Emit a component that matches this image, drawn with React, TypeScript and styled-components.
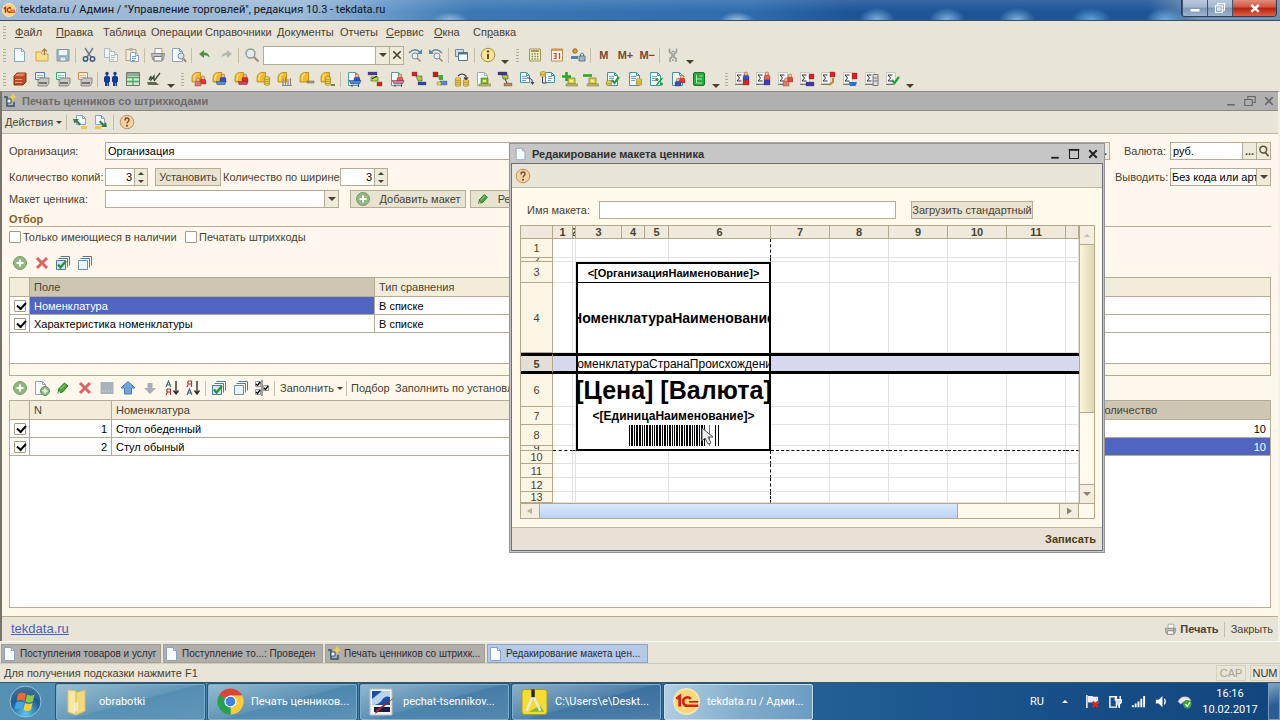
import React from "react";
import styled, { createGlobalStyle, css } from "styled-components";

const Global = createGlobalStyle`
  * { box-sizing: border-box; }
  body { margin: 0; background: #e8e4d8; font-family: "Liberation Sans", Arial, sans-serif; font-size: 11px; line-height: 14px; color: #4a4230; }
  button, input, select { font: inherit; color: inherit; margin: 0; padding: 0; border-radius: 0; }
  button { border: 0; background: none; }
  svg { display: block; flex: none; }
`;

/* ---------- shell ---------- */
const Shell = styled.div`
  min-height: 100vh;
  display: flex;
  flex-direction: column;
  overflow: hidden;
`;
const TitleBar = styled.header`
  height: 21px;
  display: flex;
  align-items: center;
  padding-left: 2px;
  gap: 4px;
  border-bottom: 1px solid #3d4c5c;
  color: #10151c;
  font-family: Roboto, sans-serif;
  background:
    radial-gradient(ellipse 18px 10px at 450px 22px, #9fc3e0, transparent),
    radial-gradient(ellipse 18px 10px at 737px 22px, #b4d0e6, transparent),
    radial-gradient(ellipse 18px 12px at 877px 20px, #7fb2dc, transparent),
    radial-gradient(ellipse 18px 12px at 947px 20px, #7fb2dc, transparent),
    radial-gradient(ellipse 18px 12px at 1017px 20px, #7fb2dc, transparent),
    radial-gradient(ellipse 20px 12px at 1091px 20px, #5fa4dc, transparent),
    radial-gradient(ellipse 20px 12px at 1165px 20px, #6aabde, transparent),
    linear-gradient(180deg, rgba(255, 255, 255, 0.12), transparent 60%),
    linear-gradient(90deg, #9fb9d4 0, #9dbad8 300px, #5d92c6 400px, #3c78b4 470px, #2f6cae 750px, #1d5597 850px, #1d5597 1150px, #7390b4 1200px);
`;
const TitleText = styled.h1`
  margin: 0;
  flex: 1;
  font: inherit;
  white-space: nowrap;
`;
const WinButtons = styled.div`
  align-self: flex-start;
  display: flex;
  height: 17px;
  margin-right: 3px;
  border: 1px solid #2c3c52;
  border-top: 0;
  border-radius: 0 0 4px 4px;
  overflow: hidden;
`;
const WinButton = styled.button<{ $close?: boolean }>`
  width: ${(p) => (p.$close ? 44 : 25)}px;
  display: grid;
  place-items: center;
  border-left: 1px solid #40546e;
  background: ${(p) =>
    p.$close
      ? "linear-gradient(#e08c7c, #d0543e 45%, #b8200c 50%, #d8604c)"
      : "linear-gradient(#b9c8dc, #a2b5cd 45%, #7d97b8 50%, #9db3cf)"};
`;
const MenuBar = styled.nav`
  height: 22px;
  display: flex;
  align-items: center;
  padding-left: 2px;
`;
const Grip = styled.span<{ $m?: number }>`
  width: 3px;
  height: 13px;
  margin: ${(p) => (p.$m ? `0 ${p.$m}px` : "0 3px 0 1px")};
  flex: none;
  background: repeating-linear-gradient(#b4ac98 0 1px, transparent 1px 3px);
`;
const MenuItem = styled.button<{ $w: number }>`
  width: ${(p) => p.$w}px;
  text-align: left;
  white-space: nowrap;
`;
const ToolBar = styled.div`
  height: 24px;
  flex: none;
  display: flex;
  align-items: center;
  padding-left: 2px;
`;
const FormTools = styled(ToolBar)`
  padding-left: 0;
`;
const Group = styled.div<{ $w: number }>`
  width: ${(p) => p.$w}px;
  flex: none;
  display: flex;
  & > button { flex: 1; }
`;
const Tool = styled.button`
  height: 20px;
  min-width: 0;
  display: grid;
  place-items: center;
`;
const MemKey = styled(Tool)`
  font-weight: bold;
  color: #7c4630;
`;
const Sep = styled.span`
  width: 1px;
  height: 15px;
  margin: 0 2px 0 1px;
  flex: none;
  background: #c5bda8;
`;
const More = styled.button`
  width: 12px;
  height: 18px;
  display: flex;
  align-items: flex-end;
  justify-content: center;
`;
const Tri = styled.span<{ $up?: boolean; $c?: string }>`
  width: 0;
  height: 0;
  border: 3px solid transparent;
  ${(p) =>
    p.$up
      ? css`border-top-width: 0; border-bottom-color: ${p.$c || "#4a4230"};`
      : css`border-bottom-width: 0; border-top-color: ${p.$c || "#4a4230"};`}
`;
const BigTri = styled(Tri)`
  border-width: 4px 4px 0;
`;

/* ---------- fields ---------- */
const FieldBox = styled.span<{ $w?: number; $h?: number }>`
  display: flex;
  ${(p) => (p.$w ? `width: ${p.$w}px;` : "flex: 1; min-width: 0;")}
  height: ${(p) => p.$h || 18}px;
  border: 1px solid #b3ab94;
  background: #fff;
  color: #000;
`;
const Input = styled.input<{ $right?: boolean }>`
  flex: 1;
  width: 0;
  min-width: 0;
  border: 0;
  outline: 0;
  padding: 0 2px;
  background: transparent;
  text-align: ${(p) => (p.$right ? "right" : "left")};
`;
const Select = styled.select`
  flex: 1;
  width: 0;
  min-width: 0;
  border: 0;
  outline: 0;
  padding: 0 0 0 1px;
  appearance: none;
  background: transparent;
`;
const FieldBtn = styled.button`
  width: 14px;
  display: grid;
  place-items: center;
  border-left: 1px solid #b3ab94;
  background: #efebda;
  font-weight: bold;
  color: #4a4230;
  line-height: 8px;
`;
const Spin = styled.span`
  width: 13px;
  display: flex;
  flex-direction: column;
  border-left: 1px solid #b3ab94;
  background: #efebda;
  & > button { flex: 1; display: grid; place-items: center; }
`;
const Btn = styled.button<{ $w: number }>`
  width: ${(p) => p.$w}px;
  height: 18px;
  flex: none;
  display: flex;
  align-items: center;
  justify-content: center;
  gap: 8px;
  border: 1px solid #b5ad96;
  background: #e8e2d0;
  white-space: nowrap;
  overflow: hidden;
`;

/* ---------- document window ---------- */
const Mdi = styled.main`
  flex: 1;
  position: relative;
  display: flex;
  flex-direction: column;
  border-left: 2px solid #77746e;
  border-right: 2px solid #f4f0e8;
  border-top: 1px solid #8a8a8a;
`;
const DocTitle = styled.div`
  height: 19px;
  display: flex;
  align-items: center;
  border-bottom: 1px solid #8c8a86;
  background: #b0b0b0;
  color: #6d6b68;
  font-weight: bold;
`;
const Heading = styled.h2`
  margin: 0 0 0 4px;
  flex: 1;
  font: inherit;
  white-space: nowrap;
`;
const TitleTool = styled.button`
  width: 19px;
  height: 16px;
  display: grid;
  place-items: center;
`;
const CommandBar = styled.div`
  height: 23px;
  display: flex;
  align-items: center;
  padding-left: 3px;
  border-bottom: 1px solid #c4b49c;
`;
const DropBtn = styled.button<{ $w?: number }>`
  ${(p) => (p.$w ? `width: ${p.$w}px;` : "")}
  display: flex;
  align-items: center;
  gap: 3px;
  white-space: nowrap;
`;
const Form = styled.section`
  flex: 1;
  display: flex;
  flex-direction: column;
  padding: 8px 7px 8px 7px;
  background: linear-gradient(#fff7ee, #fdf8ea);
`;
const Row = styled.div<{ $mb?: number }>`
  display: flex;
  align-items: center;
  height: 18px;
  margin-bottom: ${(p) => p.$mb || 0}px;
`;
const Label = styled.label<{ $w: number }>`
  width: ${(p) => p.$w}px;
  flex: none;
  white-space: nowrap;
`;
const Gap = styled.span<{ $w?: number }>`
  ${(p) => (p.$w ? `width: ${p.$w}px; flex: none;` : "flex: 1;")}
`;
const Section = styled.h3`
  margin: 4px 0 1px;
  height: 15px;
  border-bottom: 1px solid #b5ad96;
  color: #8a6216;
  font-size: 11px;
`;
const Check = styled.input`
  appearance: none;
  flex: none;
  width: 12px;
  height: 12px;
  margin: 0;
  border: 1px solid #a39b86;
  border-radius: 1px;
  background: #fff;
  position: relative;
  &:checked::after {
    content: "";
    position: absolute;
    left: 2px;
    top: 1px;
    width: 7px;
    height: 4px;
    border: solid #000;
    border-width: 0 0 2px 2px;
    transform: rotate(-48deg);
  }
`;
const CheckLabel = styled.label<{ $w: number }>`
  width: ${(p) => p.$w}px;
  display: flex;
  align-items: center;
  gap: 2px;
  white-space: nowrap;
`;
const ListBox = styled.div<{ $h?: number }>`
  ${(p) => (p.$h ? `height: ${p.$h}px;` : "flex: 1; min-height: 160px;")}
  display: flex;
  flex-direction: column;
  border: 1px solid #b3ab94;
  background: #fff;
`;
const ListFoot = styled.div`
  height: 12px;
  margin-top: auto;
  border-top: 1px solid #b3ab94;
  background: #fdf8ea;
`;
const List = styled.table`
  width: 100%;
  table-layout: fixed;
  border-collapse: separate;
  border-spacing: 0;
`;
const Th = styled.th<{ $on?: boolean }>`
  height: 19px;
  padding: 0 4px;
  border-right: 1px solid #b3ab94;
  border-bottom: 1px solid #b3ab94;
  background: ${(p) => (p.$on ? "#cdc6b2" : "#f2edda")};
  font-weight: normal;
  text-align: left;
  &:last-child { border-right: 0; }
`;
const Td = styled.td<{ $sel?: boolean; $num?: boolean; $tick?: boolean }>`
  height: 18px;
  padding: ${(p) => (p.$tick ? "0 0 0 4px" : "0 4px")};
  border-right: 1px solid #b3ab94;
  border-bottom: 1px solid #b3ab94;
  background: ${(p) => (p.$sel ? "#5065bf" : "#fff")};
  color: ${(p) => (p.$sel ? "#fff" : "#000")};
  text-align: ${(p) => (p.$num ? "right" : "left")};
  &:last-child { border-right: 0; }
  & > input { display: block; }
`;
const FormFoot = styled.footer`
  height: 25px;
  display: flex;
  align-items: center;
  padding: 0 5px 0 9px;
  border-top: 1px solid #b8a88c;
`;
const Link = styled.a`
  flex: 1;
  color: #4a5ec4;
  font-size: 13px;
`;
const TextBtn = styled.button<{ $bold?: boolean }>`
  display: flex;
  align-items: center;
  gap: 3px;
  font-weight: ${(p) => (p.$bold ? "bold" : "normal")};
`;

/* ---------- template editor dialog ---------- */
const Dialog = styled.section`
  position: absolute;
  left: 507px;
  right: 173px;
  top: 51px;
  padding: 0 1px 1px;
  border: 1px solid #939393;
  background: #c6c6c6;
`;
const DialogTitle = styled.div`
  height: 19px;
  display: flex;
  align-items: center;
  padding: 0 1px 0 3px;
  color: #2f2f2f;
  font-weight: bold;
`;
const Panel = styled.div`
  border: 1px solid #6e6e78;
  background: #fffaec;
`;
const DialogBar = styled.div`
  height: 24px;
  display: flex;
  align-items: center;
  padding-left: 3px;
  border-bottom: 1px solid #bfb7a2;
  background: #e8e4d8;
`;
const DialogBody = styled.div`
  padding: 13px 7px 8px 8px;
`;
const DialogFoot = styled.div`
  height: 23px;
  display: flex;
  align-items: center;
  justify-content: flex-end;
  padding-right: 6px;
  border-top: 1px solid #bfb7a2;
  background: #e8e2d6;
  color: #4a3c10;
`;
const Sheet = styled.div`
  border: 1px solid #b3a88a;
  background: #fffaec;
`;
const SheetMain = styled.div`
  display: flex;
`;
const GridTable = styled.table`
  flex: 1;
  width: 0;
  table-layout: fixed;
  border-collapse: separate;
  border-spacing: 0;
  background: #fff;
  & th, & td { padding: 0; }
`;
const Clip = styled.div<{ $h: number }>`
  height: ${(p) => p.$h}px;
  display: flex;
  align-items: center;
  justify-content: center;
  overflow: hidden;
  white-space: nowrap;
`;
const ColHead = styled.th`
  border-right: 1px solid #b3a88a;
  border-bottom: 1px solid #b3a88a;
  background: #efe9dc;
`;
const RowHead = styled.th<{ $sel?: boolean }>`
  border-right: 1px solid #b3a88a;
  border-bottom: 1px solid #b3a88a;
  background: #fbf6e4;
  font-weight: ${(p) => (p.$sel ? "bold" : "normal")};
  ${(p) => p.$sel && "border-top: 3px solid #000; border-bottom: 3px solid #000; background: #e4dfd6;"}
`;
type Edge = "break" | "label" | "none";
const Cell = styled.td<{ $sel?: boolean; $edge?: Edge; $left?: boolean; $top?: string; $bottom?: string }>`
  border-right: 1px solid #e2e2e2;
  border-bottom: ${(p) => p.$bottom || "1px solid #e2e2e2"};
  ${(p) => p.$top && `border-top: ${p.$top};`}
  ${(p) => p.$edge === "break" && "border-right: 1px dashed #000;"}
  ${(p) => p.$edge === "label" && "border-right: 2px solid #000;"}
  ${(p) => p.$left && "border-left: 2px solid #000;"}
  ${(p) => p.$sel && "border-top: 3px solid #000; border-bottom: 3px solid #000; background: #d6d8f0; border-right-width: 0;"}
`;
const LabelText = styled.span<{ $size: number; $bold?: boolean }>`
  flex: none;
  color: #000;
  font-size: ${(p) => p.$size}px;
  line-height: ${(p) => p.$size}px;
  font-weight: ${(p) => (p.$bold ? "bold" : "normal")};
`;
const VScroll = styled.div`
  width: 15px;
  display: flex;
  flex-direction: column;
  border-left: 1px solid #b3a88a;
`;
const HScroll = styled.div`
  height: 15px;
  display: flex;
  border-top: 1px solid #b3a88a;
`;
const ScrollBtn = styled.button`
  width: 19px;
  height: 19px;
  display: grid;
  place-items: center;
  background: #f3eedd;
  border: solid #b3a88a;
  border-width: 0 1px 0 0;
  ${VScroll} & { width: 14px; border-width: 0 0 1px; }
  ${HScroll} & { height: 14px; }
  ${VScroll} &:last-child { border-width: 1px 0 0; }
`;
const VThumb = styled.div`
  flex: 168;
  border-bottom: 1px solid #b3a88a;
  background: linear-gradient(90deg, #faf5dc, #e0d8b0);
`;
const HThumb = styled.div`
  flex: 419;
  border-right: 1px solid #93a8c4;
  background: linear-gradient(#dbe8fc, #bdd2f4);
`;
const Track = styled.div<{ $f: number; $edge?: boolean }>`
  flex: ${(p) => p.$f};
  ${(p) => p.$edge && "border-right: 1px solid #b3a88a;"}
`;

/* ---------- bottom bars ---------- */
const WindowTabs = styled.div`
  height: 23px;
  display: flex;
  align-items: flex-start;
  gap: 2px;
  padding: 2px 1px 0;
  border-top: 1px solid #f8f6f0;
  border-bottom: 1px solid #d2ccbc;
`;
const WindowTab = styled.button<{ $w: number; $on?: boolean }>`
  width: ${(p) => p.$w}px;
  height: 19px;
  display: flex;
  align-items: center;
  gap: 2px;
  border: 1px solid ${(p) => (p.$on ? "#8da4bf" : "#a29f99")};
  background: ${(p) => (p.$on ? "#b4cae8" : "#b0aeab")};
  color: #2c2c34;
  font-size: 10px;
  white-space: nowrap;
  overflow: hidden;
`;
const Status = styled.div`
  height: 18px;
  display: flex;
  align-items: center;
  padding-left: 4px;
  & > span:first-child { flex: 1; }
`;
const Led = styled.span<{ $off?: boolean }>`
  width: 30px;
  height: 16px;
  margin-left: 4px;
  border: 1px solid #d6d0c2;
  text-align: center;
  color: ${(p) => (p.$off ? "#a8a294" : "#3c3626")};
`;
const TaskBar = styled.footer`
  height: 38px;
  display: flex;
  align-items: center;
  padding-left: 9px;
  border-top: 1px solid #3c5468;
  background: linear-gradient(90deg, #5390b2 0, #4683ab 350px, #38709f 600px, #215c93 850px, #184f88 1050px, #12457e);
  color: #fff;
  font-family: Roboto, sans-serif;
`;
const Tasks = styled.div`
  display: flex;
  gap: 3px;
  margin-left: 14px;
  flex: 1;
`;
const Task = styled.button<{ $on?: boolean }>`
  width: 149px;
  height: 36px;
  display: flex;
  align-items: center;
  gap: 7px;
  padding-left: 8px;
  border: 1px solid ${(p) => (p.$on ? "#c8dcea" : "#7fb0cc")};
  border-radius: 2px;
  box-shadow: 0 0 0 1px #245474;
  background: ${(p) =>
    p.$on
      ? "linear-gradient(100deg, #b3cfe2 0, #7fabcb 55%, #6b9cc2)"
      : "linear-gradient(165deg, rgba(255,255,255,.42), rgba(255,255,255,.12) 50%, rgba(255,255,255,.04) 52%, rgba(255,255,255,.12))"};
  white-space: nowrap;
`;
const Tray = styled.div`
  display: flex;
  align-items: center;
  gap: 8px;
`;
const Clock = styled.time`
  width: 60px;
  text-align: center;
  line-height: 16px;
`;
const ShowDesktop = styled.button`
  width: 12px;
  height: 37px;
  border: 1px solid #7a9abb;
  background: linear-gradient(160deg, #7fa4c6, #2b5d92 60%);
`;

/* ---------- icons ---------- */
const Svg = ({ s = 16, children }: { s?: number; children: React.ReactNode }) => (
  <svg width={s} height={s} viewBox="0 0 16 16" fill="none" aria-hidden="true">{children}</svg>
);
const Page = ({ x = 2, y = 1, w = 11, h = 14, c = "#8ba3c0" }) => (
  <g>
    <path d={`M${x + 0.5} ${y + 0.5}h${w - 4}l3 3v${h - 4}h-${w - 1}z`} fill="#f7fbff" stroke={c} />
    <path d={`M${x + w - 3.5} ${y + 0.5}v3h3`} stroke={c} />
  </g>
);
const Lines = ({ x = 4, y = 5, w = 5, c = "#6f9fd8" }) => (
  <path d={`M${x} ${y + 0.5}h${w}M${x} ${y + 2.5}h${w}M${x} ${y + 4.5}h${w - 1}`} stroke={c} />
);
const Man = ({ x, y, c }: { x: number; y: number; c: string }) => (
  <g>
    <path d={`M${x} ${y + 8}v-3q0-2 2-2h2q2 0 2 2v3z`} fill={c} stroke="#502020" strokeWidth=".3" />
    <circle cx={x + 3} cy={y + 1.8} r="1.8" fill="#f2b890" stroke="#9a4a30" strokeWidth=".5" />
  </g>
);
const Coins = ({ x, y, n = 3 }: { x: number; y: number; n?: number }) => (
  <g>
    {Array.from({ length: n }, (_, i) => (
      <ellipse key={i} cx={x + 3} cy={y + (n - i) * 2} rx="3" ry="1.3" fill="#f8dc58" stroke="#9c7c1c" strokeWidth=".7" />
    ))}
  </g>
);
const Disc = () => (
  <g>
    <path d="M1 11V7q0-5 5-5.500h3.500v9.500z" fill="#f2bc28" stroke="#b8840c" strokeWidth=".8" />
    <path d="M3 9.500V7q0-3 3-4" stroke="#fbe490" strokeWidth="1.300" />
  </g>
);
const Sigma = () => (
  <g>
    <path d="M1.500 1.500h9v11h-9z" fill="#f8f8f6" stroke="#c8c8c4" />
    <path d="M7.500 4H3l2.500 3L3 10h4.500" stroke="#333" />
    <path d="M1 13.500h8" stroke="#777" />
  </g>
);
const Tick = ({ x = 7, y = 9, c = "#22a040" }) => <path d={`M${x} ${y}l2.500 3L${x + 7} ${y - 3}`} stroke={c} strokeWidth="2.200" />;
const Box = ({ x, y, c, w = 5, h = 4 }: { x: number; y: number; c: string; w?: number; h?: number }) => (
  <path d={`M${x} ${y}h${w}v${h}h-${w}z`} fill={c} stroke="#333" strokeWidth=".3" />
);
const Till = ({ c = "#7fc030" }) => (
  <g>
    <path d="M6 7h7v6H6z" fill={c} stroke="#4a6a20" strokeWidth=".6" />
    <path d="M8 9h3v2H8z" fill="#f4f080" />
    <path d="M4 13h12v2H4z" fill="#c8c070" stroke="#6a6430" strokeWidth=".5" />
  </g>
);
const Glyph: Record<string, React.ReactNode> = {
  page: <Page />,
  open: <><path d="M2 5h5l1 2h6v7H2z" fill="#f8e08c" stroke="#c8a450" /><path d="M10.500 8V2M8 4.500L10.500 2 13 4.500" stroke="#a88430" strokeWidth="1.300" /></>,
  save: <><path d="M2 2.500h12v11.500H2z" fill="#9fb8c4" stroke="#7f99a6" /><path d="M4 3h8v5H4z" fill="#eef5f8" /><path d="M5 10h6v4H5z" fill="#dfe9ee" stroke="#6f8996" strokeWidth=".6" /></>,
  cut: <><path d="M4 1l6 9M12 1L6 10" stroke="#6c7c8c" strokeWidth="1.500" /><circle cx="4.500" cy="12" r="2.200" stroke="#3c5a80" strokeWidth="1.500" /><circle cx="11.500" cy="12" r="2.200" stroke="#3c5a80" strokeWidth="1.500" /></>,
  copy: <g opacity=".6"><Page x={1} y={1} w={9} h={10} /><Page x={6} y={4} w={9} h={11} /><Lines x={8} y={8} w={4} c="#8aa" /></g>,
  paste: <><path d="M2 2.500h10v11H2z" fill="#f1ebd4" stroke="#b3a47c" /><path d="M5 1h4v3H5z" fill="#b5b5a8" /><Page x={6} y={5} w={9} h={10} /><Lines x={8} y={9} w={4} /></>,
  print: <><path d="M5 1.500h7v5H5z" fill="#fff" stroke="#999" /><path d="M1.500 6.500h13l-1 6h-11z" fill="#c4c4c2" stroke="#8a8a8a" /><path d="M4 9.500h8v4.500H4z" fill="#f4f4f4" stroke="#777" /><path d="M11 8h2" stroke="#5a8a3a" /></>,
  preview: <><Page x={1} /><circle cx="10" cy="9" r="3" fill="#d6e6ee" stroke="#7f8c94" /><path d="M12.500 11.500L15 15" stroke="#b07a50" strokeWidth="1.800" /></>,
  undo: <path d="M2 7l5-4v2.500q5 0 5.500 5-2-2.500-5.500-2.300V11z" fill="#4c9442" />,
  redo: <path d="M14 7L9 3v2.500q-5 0-5.500 5 2-2.500 5.500-2.300V11z" fill="#b3b8ae" />,
  search: <><circle cx="6.500" cy="6.500" r="4.500" fill="#e2eaee" stroke="#8f9498" strokeWidth="1.300" /><path d="M10 10l4.500 4.500" stroke="#a08c78" strokeWidth="2" /></>,
  next: <><circle cx="8" cy="9" r="3" fill="#e4eef4" stroke="#868c92" /><path d="M10 11l3.500 3.500" stroke="#a08c78" strokeWidth="1.600" /><path d="M2 6q5-6 11-1" stroke="#5b86a8" strokeWidth="1.400" /><path d="M15 2v5h-5z" fill="#5b86a8" /></>,
  prev: <><circle cx="9" cy="9" r="3" fill="#e4eef4" stroke="#868c92" /><path d="M11 11l3.500 3.500" stroke="#a08c78" strokeWidth="1.600" /><path d="M14 6Q9 0 3 5" stroke="#5b86a8" strokeWidth="1.400" /><path d="M1 2v5h5z" fill="#5b86a8" /></>,
  windows: <><path d="M1.500 2.500h8v7h-8z" fill="#cfdfe8" stroke="#6d8ca0" /><path d="M4.500 5.500h9v8h-9z" fill="#fff" stroke="#4f7690" /><path d="M4 6.500h10" stroke="#4f7690" strokeWidth="2" /></>,
  info: <><circle cx="8" cy="8" r="6.800" fill="#f6e49a" stroke="#a48c44" /><path d="M8 7v5" stroke="#6a5414" strokeWidth="2" /><circle cx="8" cy="4.500" r="1.200" fill="#6a5414" /></>,
  calc: <><path d="M2.500 2h11v12h-11z" fill="#f6eecb" stroke="#a59256" /><path d="M4 4h8" stroke="#8a7430" strokeWidth="1.500" /><path d="M4.500 7h7M4.500 9.500h7M4.500 12h7" stroke="#7a9040" strokeWidth="1.500" strokeDasharray="1.500 1.200" /></>,
  calendar: <><path d="M2.500 2h11v12h-11z" fill="#fff5e8" stroke="#c08a50" /><path d="M3 3h10" stroke="#e09848" strokeWidth="2" /><path d="M4.500 6.500h2.500v5H4.500M5 9h2M10.500 6v6" stroke="#d04438" strokeWidth="1.200" /></>,
  lock: <><circle cx="5" cy="4" r="2.200" fill="#d8a448" stroke="#8a6420" /><path d="M1 9h7v3H1z" fill="#4d84b4" /><path d="M9 9h6v5H9z" fill="#9fb4c4" stroke="#5f7484" /><path d="M10.500 9V7q1.500-2 3 0v2" stroke="#5f7484" /></>,
  wrench: <path d="M4.500 1.500v3.500L7 7v3l-2 1.500V15M11.500 1.500V5L9 7v3l2 1.500V15M6.500 4.500h3M7 13h2" stroke="#9a9c98" strokeWidth="1.600" />,
  book: <><path d="M2 5l3-3h9v9l-3 3H2z" fill="#b84c28" stroke="#8c3418" /><path d="M2.500 5l3-2.500h8L11 5z" fill="#e88858" /><path d="M3 8.500h7M3 11.500h7" stroke="#e8a070" /></>,
  people: <><path d="M1 6l3-2 3 2v5H6v4H4.500v-3H4v3H2v-4H1zM9 6l3-2 3 2v5h-1v4h-1.500v-3H12v3h-2v-4H9z" fill="#143c98" /><circle cx="4" cy="2.500" r="1.700" fill="#143c98" /><circle cx="12" cy="2.500" r="1.700" fill="#143c98" /></>,
  cash: <><path d="M1.500 1.500h13v13h-13z" fill="#cfe8cf" stroke="#6c786c" /><path d="M2 3.500h12" stroke="#98a898" strokeWidth="3" /><path d="M2 6.500h12M8 6v8M2 10.500h12" stroke="#4ca864" strokeWidth="1.300" /></>,
  sign: <><path d="M1 11h9l3 3H2z" fill="#606c50" /><path d="M3 9l2-4v4l3-4v4M8 10l6-8" stroke="#3c5040" strokeWidth="1.300" /></>,
  discRed: <><Disc /><Man x={9} y={5} c="#e03830" /><Man x={4} y={7} c="#e87060" /></>,
  discBlue: <><Disc /><Man x={8} y={3} c="#2c50d0" /><path d="M4 10.500h10l-1 3H5z" fill="#5090d0" stroke="#246" strokeWidth=".5" /></>,
  discRed2: <><Disc /><Man x={8} y={3} c="#e02828" /><path d="M4 10.500h10l-1 3H5z" fill="#d04858" stroke="#624" strokeWidth=".5" /></>,
  discCoins: <><Disc /><Coins x={8} y={5} n={4} /></>,
  discBars: <><Disc /><path d="M6 15V8M8.500 15V6M11 15V8M13.500 15V7M5 14.500h10" stroke="#8a8a88" strokeWidth="1.200" /></>,
  discArrow: <><Disc /><path d="M8 10h7v2H8z" fill="#aaa48c" stroke="#665" strokeWidth=".6" /></>,
  discCoins2: <><Disc /><Coins x={5} y={5} n={4} /><path d="M11 14h4" stroke="#776" strokeWidth="2" /></>,
  saleDoc: <><Page c="#48a0a8" /><Man x={8} y={3} c="#2c50d0" /><path d="M3 9.500h12l-1.500 3.500H5z" fill="#5088d8" stroke="#234" strokeWidth=".5" /><path d="M5.500 15h1M12 15h1" stroke="#222" strokeWidth="1.500" /></>,
  flow1: <><Box x={1} y={1} c="#5038a8" w={9} h={3} /><path d="M4 6h7v4H4z" fill="#b8e030" stroke="#3a5a10" strokeWidth=".6" /><path d="M5 8l5-3" stroke="#222" /><Box x={10} y={11} c="#e02020" w={5} /></>,
  buyDoc: <><Page c="#48a0a8" /><Man x={8} y={3} c="#e06050" /><path d="M3 9.500h12l-1.500 3.500H5z" fill="#d08090" stroke="#524" strokeWidth=".5" /><path d="M5.500 15h1M12 15h1" stroke="#222" strokeWidth="1.500" /></>,
  flow2: <><Box x={1} y={1} c="#e02020" w={5} /><path d="M5 5h6v5H7z" fill="#a8d030" stroke="#333" strokeWidth=".5" /><Box x={7} y={11} c="#3040c0" w={8} h={3} /></>,
  flow3: <><Box x={1} y={1} c="#d81818" w={5} h={5} /><path d="M6 4h5v5H7z" fill="#48a838" /><Box x={8} y={10} c="#5888d8" w={7} /><path d="M5 11h4v3H5z" fill="#e8e040" stroke="#665" strokeWidth=".4" /></>,
  coinsMove: <><Coins x={1} y={6} n={4} /><Coins x={9} y={8} n={3} /><path d="M4 5q4-4 8 0v3M10 6.500l2 2 2-2" stroke="#333" strokeWidth="1.100" /></>,
  tillDoc: <><Page c="#aaa" /><Till /></>,
  flow4: <><Box x={1} y={1} c="#4830a0" w={9} h={3} /><path d="M5 4h6v4H6z" fill="#a8d030" stroke="#333" strokeWidth=".5" /><path d="M8 8l2 4" stroke="#333" /><Box x={7} y={12} c="#b88858" w={8} h={3} /></>,
  docArrow: <><Page x={1} y={1} w={10} h={11} c="#3c98b0" /><Lines x={3} /><path d="M8 7q5-1 5.500 5" stroke="#345" /><path d="M11.500 11h4l-2 3z" fill="#345" /></>,
  docCoin: <><Page x={5} y={1} w={10} h={11} c="#3c98b0" /><Lines x={8} w={4} /><Coins x={0} y={0} n={2} /><path d="M2.500 6v6h4" stroke="#345" /></>,
  plusCoins: <><path d="M4.500 1v9M0 5.500h9" stroke="#28a828" strokeWidth="2.600" /><Till c="#e0d050" /></>,
  minusCoins: <><path d="M0 4.500h9" stroke="#28a828" strokeWidth="2.600" /><Till c="#e0d050" /></>,
  docTick: <><Page c="#3c98b0" /><Lines /><Coins x={1} y={9} n={2} /><Tick /></>,
  docCoins: <><Page c="#3c98b0" /><Lines /><Coins x={9} y={7} n={3} /></>,
  docPct: <><Page c="#3c98b0" /><Lines /><path d="M8.500 14l6-7" stroke="#20a040" strokeWidth="1.500" /><circle cx="9" cy="8.500" r="1.500" fill="#20a040" /><circle cx="13.500" cy="13" r="1.500" fill="#20a040" /></>,
  docMen: <><Page c="#3c98b0" /><Man x={9} y={4} c="#e03830" /><Man x={5} y={7} c="#2c50d0" /></>,
  green: <><rect x="2.500" y="1.500" width="11" height="13" rx="1.500" fill="#28a840" stroke="#187828" /><path d="M5.500 4v8h5.500M5.500 8H11M8.500 5h3" stroke="#a8f0b0" /></>,
  s1: <><Sigma /><Man x={9} y={1} c="#3050d0" /><Box x={9} y={9} c="#e02020" w={6} h={5} /></>,
  s2: <><Sigma /><Man x={9} y={1} c="#e06060" /><Box x={9} y={9} c="#3040c0" w={6} h={5} /></>,
  s3: <><Sigma /><Man x={10} y={3} c="#e04838" /><Man x={6} y={7} c="#e87868" /></>,
  s4: <><Sigma /><Box x={10} y={3} c="#e02020" w={5} h={5} /><Box x={7} y={11} c="#4038b0" w={8} /></>,
  s5: <><Sigma /><Box x={10} y={1} c="#e02020" w={5} h={5} /><path d="M13 7v4l-4 3" stroke="#c88820" strokeWidth="2" /></>,
  s6: <><Sigma /><Box x={10} y={2} c="#e02020" w={5} h={6} /><path d="M7 11h8l-1.500 4H8z" fill="#2870e0" /></>,
  s7: <><Sigma /><path d="M9 3.500h5v11H9zM9 7h5M9 10h5" fill="#ddd" stroke="#777" /></>,
  s8: <><Sigma /><Tick /></>,
  restore: <><Page x={4} y={1} w={10} h={10} /><path d="M1 5h6L5.500 6.500 9 10l-1.500 1.500L4 8l-1.500 1.500z" fill="#3c7c40" /><path d="M9 12h6v3H9z" fill="#e8c850" /></>,
  store: <><Page x={2} y={1} w={10} h={10} /><path d="M14 13H8l1.500-1.500L6 8l1.500-1.500L11 10l2-2z" fill="#3c7c40" /><path d="M2 12h6v3H2z" fill="#e8c850" /></>,
  help: <><circle cx="8" cy="8" r="6.800" fill="#f6d0a4" stroke="#b89060" /><path d="M6 6.500q0-2.500 2-2.500t2 2q0 1-1 1.700T8 9.500" stroke="#6a4a28" strokeWidth="1.300" /><circle cx="8" cy="11.800" r="1" fill="#6a4a28" /></>,
  add: <><circle cx="8" cy="8" r="6.500" fill="#8fb882" stroke="#7a9c74" /><path d="M8 4.500v7M4.500 8h7" stroke="#fff" strokeWidth="2" /></>,
  addCopy: <><Page x={1} /><circle cx="11" cy="11" r="4.500" fill="#8fb882" stroke="#6a8c64" /><path d="M11 8.500v5M8.500 11h5" stroke="#fff" strokeWidth="1.500" /></>,
  edit: <><path d="M3 13l1-4.500L9.500 3l3.500 3-5.500 6z" fill="#4ba83c" stroke="#286820" /><path d="M5.500 9L10 4.500" stroke="#a4e090" /><path d="M3 13.500l.8-2.500 1.700 1.700z" fill="#f0e0a0" /></>,
  del: <path d="M3 3l10 10M13 3L3 13" stroke="#dc6464" strokeWidth="3" />,
  grey: <><path d="M1.500 2h13v12h-13z" fill="#a9b2ba" /><path d="M3 11h10" stroke="#c8d0d4" strokeDasharray="2 1" /></>,
  up: <path d="M8 1.500L15 8h-3.500v6h-7V8H1z" fill="#6ca8dc" stroke="#4c7cac" />,
  down: <path d="M8 14L2 8h3.500V3h5v5H14z" fill="#a8aeb4" />,
  sortA: <><path d="M2 7l2.500-6L7 7M3 5h3" stroke="#3c7070" strokeWidth="1.200" /><path d="M6.500 15V9h-3q-1.500 1.500 0 3h3M3.500 12L2 15" stroke="#b03838" strokeWidth="1.200" /><path d="M12 1v12M9.500 10.500L12 14l2.500-3.500" stroke="#222" strokeWidth="1.300" /></>,
  sortZ: <><path d="M6.500 7V1h-3Q2 2.500 3.500 4h3M3.500 4L2 7" stroke="#b03838" strokeWidth="1.200" /><path d="M2 15l2.500-6L7 15M3 13h3" stroke="#3c6080" strokeWidth="1.200" /><path d="M12 1v12M9.500 10.500L12 14l2.500-3.500" stroke="#222" strokeWidth="1.300" /></>,
  checkAll: <><path d="M5.500 1.500h9v9M3.500 3.500h9v9" stroke="#4c7ca0" /><path d="M1.500 5.500h9v9h-9z" fill="#d4e8f4" stroke="#4c7ca0" /><path d="M3 9.500l2.500 3L11 6" stroke="#2c9038" strokeWidth="2.400" /></>,
  uncheckAll: <><path d="M5.500 1.500h9v9M3.500 3.500h9v9" stroke="#4c7ca0" /><path d="M1.500 5.500h9v9h-9z" fill="#eaf4fc" stroke="#6c90ac" /></>,
  invert: <><path d="M1.500 1.500h5v5h-5zM1.500 9.500h5v5h-5zM9.500 5.500h5v5h-5z" fill="#fff" stroke="#999" /><path d="M8 0v16" stroke="#444" /><path d="M2 4l1.500 1.500L6 2M2 12l1.500 1.500L6 10M10 8l1.500 1.500L14 6" stroke="#000" strokeWidth="1.300" /></>,
  form: <><path d="M2 4h3v9h7V9" stroke="#34506c" strokeWidth="1.500" /><path d="M5 6h4v4H5z" fill="#fff" stroke="#34506c" /><path d="M11 0l1.300 2.700L15 4l-2.700 1.300L11 8 9.700 5.300 7 4l2.700-1.300z" fill="#f4d040" /></>,
};
const printerDoc = (c: string) => (
  <>
    <path d="M1.500 1.500h9v7h-9z" fill="#f4f8ff" stroke={c} /><path d="M3 4.500h6M3 6.500h6" stroke={c} opacity=".6" />
    <path d="M4 9l3-2h8v5l-2 3H4z" fill="#c8c6be" stroke="#777" strokeWidth=".8" /><path d="M5 12h8" stroke="#444" strokeWidth="1.300" />
  </>
);
Glyph.pBlue = printerDoc("#4878d0");
Glyph.pGreen = printerDoc("#3ca878");
Glyph.pOrange = printerDoc("#e88040");

const Icon = ({ n, s }: { n: string; s?: number }) => <Svg s={s}>{Glyph[n]}</Svg>;
const Tools = ({ w, names }: { w: number; names: string }) => (
  <Group $w={w}>
    {names.split(" ").map((n, i) => (
      <Tool key={i} type="button" aria-label={n}><Icon n={n} /></Tool>
    ))}
  </Group>
);
const OneC = ({ s }: { s: number }) => (
  <Svg s={s}>
    <circle cx="8" cy="8" r="7.500" fill="#f8d878" stroke="#f4e8b8" />
    <path d="M2 6.500L4 5v6" stroke="#cc2418" strokeWidth="1.700" />
    <path d="M10.500 6.500A2.500 2.500 0 1 0 9 10.500h6" stroke="#cc2418" strokeWidth="1.500" />
    <path d="M9.500 8.200H15" stroke="#cc2418" strokeWidth="1" />
  </Svg>
);
const Magnifier = () => (
  <Svg s={12}><circle cx="7" cy="6" r="4.500" stroke="#5a5238" strokeWidth="2" /><path d="M10 10l4 5" stroke="#5a5238" strokeWidth="2.200" /></Svg>
);
const MoreBtn = () => <More type="button" aria-label="Ещё"><BigTri /></More>;

/* ---------- sheet ---------- */
const colWidths = [32, 20, 3, 46, 23, 24, 102, 59, 59, 59, 59, 59];
const tail = [7, 8, 9, 10, 11, 12];
const Tail = ({ sel, bottom }: { sel?: boolean; bottom?: string }) => (
  <>{tail.map((c) => <Cell key={c} $sel={sel} $bottom={bottom} />)}</>
);
const PlainRow = ({ n, h, bottom }: { n: number; h: number; bottom?: string }) => (
  <tr>
    <RowHead scope="row"><Clip $h={h - 1}>{n}</Clip></RowHead>
    <Cell $bottom={bottom} />
    <Cell $bottom={bottom} />
    <Cell colSpan={3} $bottom={bottom} />
    <Cell $edge="break" $bottom={bottom} />
    <Tail bottom={bottom} />
  </tr>
);
const LabelRow = ({ n, h, top, bottom, cut, children }: {
  n: number; h: number; top?: string; bottom?: string; cut?: string; children?: React.ReactNode;
}) => {
  const used = parseInt(top || "0", 10) + parseInt(bottom || "0", 10);
  return (
    <tr>
      <RowHead scope="row"><Clip $h={h - 1}>{n}</Clip></RowHead>
      <Cell $bottom={cut} />
      <Cell $bottom={cut} />
      <Cell colSpan={4} $left $edge="label" $top={top} $bottom={bottom || "0"}><Clip $h={h - used}>{children}</Clip></Cell>
      <Tail bottom={cut} />
    </tr>
  );
};
const bars = "1121112121111121211111212111211121111121112111212111112111211";
const Barcode = () => {
  let x = 0;
  const rects: React.ReactNode[] = [];
  bars.split("").forEach((b, i) => {
    const w = Number(b);
    if (i % 2 === 0) rects.push(<rect key={i} x={x} y="0" width={w} height="21" fill="#000" />);
    x += w;
  });
  return (
    <svg width="90" height="21" viewBox="0 0 90 21" aria-label="Штрихкод">
      {rects}
      <path d="M80.500 0v21" stroke="#777" />
      <path d="M86.500 0v21M89.500 0v21" stroke="#000" />
      <path d="M73 3v13l3-3 3 6 3-1-3-6h5z" fill="#eee" stroke="#555" />
    </svg>
  );
};
const TemplateSheet = () => (
  <Sheet>
    <SheetMain>
      <GridTable>
        <colgroup>{colWidths.map((w, i) => <col key={i} width={w} />)}<col /></colgroup>
        <thead>
          <tr>
            <ColHead />
            {[1, 2, 3, 4, 5, 6, 7, 8, 9, 10, 11].map((c) => <ColHead key={c} scope="col"><Clip $h={12}>{c}</Clip></ColHead>)}
            <ColHead />
          </tr>
        </thead>
        <tbody>
          <PlainRow n={1} h={19} />
          <PlainRow n={2} h={4} />
          <LabelRow n={3} h={21} top="2px solid #000" bottom="1px solid #000">
            <LabelText $size={11} $bold>{"<[ОрганизацияНаименование]>"}</LabelText>
          </LabelRow>
          <LabelRow n={4} h={70}><LabelText $size={14} $bold>НоменклатураНаименование</LabelText></LabelRow>
          <tr>
            <RowHead scope="row" $sel><Clip $h={15}>5</Clip></RowHead>
            <Cell $sel />
            <Cell $sel />
            <Cell colSpan={4} $left $edge="label" $top="3px solid #000" $bottom="3px solid #000">
              <Clip $h={15}><LabelText $size={12}>НоменклатураСтранаПроисхождения</LabelText></Clip>
            </Cell>
            <Tail sel />
          </tr>
          <LabelRow n={6} h={33}><LabelText $size={25} $bold>[Цена] [Валюта]</LabelText></LabelRow>
          <LabelRow n={7} h={18}><LabelText $size={12} $bold>{"<[ЕдиницаНаименование]>"}</LabelText></LabelRow>
          <LabelRow n={8} h={21}><Barcode /></LabelRow>
          <LabelRow n={9} h={5} bottom="2px solid #000" cut="1px dashed #000" />
          <PlainRow n={10} h={13} />
          <PlainRow n={11} h={14} />
          <PlainRow n={12} h={14} />
          <PlainRow n={13} h={11} />
        </tbody>
      </GridTable>
      <VScroll>
        <ScrollBtn type="button" aria-label="Вверх"><Tri $up $c="#c4bca6" /></ScrollBtn>
        <VThumb />
        <Track $f={71} />
        <ScrollBtn type="button" aria-label="Вниз"><BigTri $c="#8a8272" /></ScrollBtn>
      </VScroll>
    </SheetMain>
    <HScroll>
      <ScrollBtn type="button" aria-label="Влево"><Svg s={8}><path d="M12 2v12L2 8z" fill="#b8b09c" /></Svg></ScrollBtn>
      <HThumb />
      <Track $f={101} $edge />
      <ScrollBtn type="button" aria-label="Вправо"><Svg s={8}><path d="M4 1v14l10-7z" fill="#8a8272" /></Svg></ScrollBtn>
      <Gap $w={15} />
    </HScroll>
  </Sheet>
);

const TemplateDialog = () => (
  <Dialog role="dialog" aria-label="Редакирование макета ценника">
    <DialogTitle>
      <Icon n="page" s={14} />
      <Heading>Редакирование макета ценника</Heading>
      <TitleTool type="button" aria-label="Свернуть"><Svg s={12}><path d="M3 13h10" stroke="#222" strokeWidth="2.500" /></Svg></TitleTool>
      <TitleTool type="button" aria-label="Развернуть"><Svg s={12}><path d="M2 2h12v12H2z" stroke="#222" strokeWidth="1.400" /><path d="M1 2.500h14" stroke="#222" strokeWidth="2.500" /></Svg></TitleTool>
      <TitleTool type="button" aria-label="Закрыть"><Svg s={12}><path d="M3 3l10 10M13 3L3 13" stroke="#222" strokeWidth="2.500" /></Svg></TitleTool>
    </DialogTitle>
    <Panel>
      <DialogBar><Tool type="button" aria-label="Справка"><Icon n="help" /></Tool></DialogBar>
      <DialogBody>
        <Row $mb={6}>
          <Gap $w={7} />
          <Label $w={72} htmlFor="tpl">Имя макета:</Label>
          <FieldBox $w={297}><Input id="tpl" /></FieldBox>
          <Gap $w={15} />
          <Btn type="button" $w={122}>Загрузить стандартный</Btn>
        </Row>
        <TemplateSheet />
      </DialogBody>
      <DialogFoot><TextBtn type="button" $bold>Записать</TextBtn></DialogFoot>
    </Panel>
  </Dialog>
);

/* ---------- form ---------- */
const NumberField = ({ id, w, value }: { id: string; w: number; value: string }) => (
  <FieldBox $w={w}>
    <Input id={id} $right defaultValue={value} />
    <Spin>
      <button type="button" aria-label="Больше"><Tri $up /></button>
      <button type="button" aria-label="Меньше"><Tri /></button>
    </Spin>
  </FieldBox>
);

const PriceTagForm = () => (
  <Form>
    <Row $mb={8}>
      <Label $w={96} htmlFor="org">Организация:</Label>
      <FieldBox><Input id="org" defaultValue="Организация" /><FieldBtn type="button">...</FieldBtn></FieldBox>
      <Gap $w={14} />
      <Label $w={46} htmlFor="cur">Валюта:</Label>
      <FieldBox $w={101}>
        <Input id="cur" defaultValue="руб." />
        <FieldBtn type="button">...</FieldBtn>
        <FieldBtn type="button" aria-label="Открыть"><Magnifier /></FieldBtn>
      </FieldBox>
    </Row>
    <Row $mb={4}>
      <Label $w={96} htmlFor="copies">Количество копий:</Label>
      <NumberField id="copies" w={43} value="3" />
      <Gap $w={7} />
      <Btn type="button" $w={66}>Установить</Btn>
      <Gap $w={2} />
      <Label $w={117} htmlFor="across">Количество по ширине:</Label>
      <NumberField id="across" w={48} value="3" />
      <Gap />
      <Label $w={55} htmlFor="out">Выводить:</Label>
      <FieldBox $w={101}>
        <Select id="out"><option>Без кода или артикула</option></Select>
        <FieldBtn type="button" aria-label="Выбрать"><BigTri /></FieldBtn>
      </FieldBox>
    </Row>
    <Row>
      <Label $w={96} htmlFor="layout">Макет ценника:</Label>
      <FieldBox $w={234}>
        <Select id="layout"><option> </option></Select>
        <FieldBtn type="button" aria-label="Выбрать"><BigTri /></FieldBtn>
      </FieldBox>
      <Gap $w={11} />
      <Btn type="button" $w={116}><Icon n="add" />Добавить макет</Btn>
      <Gap $w={4} />
      <Btn type="button" $w={142}><Icon n="edit" s={14} />Редактировать макет</Btn>
    </Row>
    <Section>Отбор</Section>
    <Row $mb={8}>
      <CheckLabel $w={176}><Check type="checkbox" />Только имеющиеся в наличии</CheckLabel>
      <CheckLabel $w={130}><Check type="checkbox" />Печатать штрихкоды</CheckLabel>
    </Row>
    <Row $mb={5}><Tools w={87} names="add del checkAll uncheckAll" /></Row>
    <ListBox $h={99}>
      <List>
        <colgroup><col width={20} /><col width={345} /><col /></colgroup>
        <thead><tr><Th /><Th $on>Поле</Th><Th>Тип сравнения</Th></tr></thead>
        <tbody>
          <tr><Td $tick><Check type="checkbox" defaultChecked aria-label="Номенклатура" /></Td><Td $sel>Номенклатура</Td><Td>В списке</Td></tr>
          <tr><Td $tick><Check type="checkbox" defaultChecked aria-label="Характеристика номенклатуры" /></Td><Td>Характеристика номенклатуры</Td><Td>В списке</Td></tr>
        </tbody>
      </List>
      <ListFoot />
    </ListBox>
    <FormTools>
      <Tools w={195} names="add addCopy edit del grey up down sortA sortZ" />
      <Sep />
      <Tools w={65} names="checkAll uncheckAll invert" />
      <Sep />
      <Gap $w={3} />
      <DropBtn type="button" $w={65}>Заполнить<Tri /></DropBtn>
      <Sep />
      <Gap $w={2} />
      <DropBtn type="button" $w={44}>Подбор</DropBtn>
      <DropBtn type="button">Заполнить по установленным</DropBtn>
    </FormTools>
    <ListBox>
      <List>
        <colgroup><col width={20} /><col width={82} /><col /><col width={176} /></colgroup>
        <thead><tr><Th /><Th>N</Th><Th>Номенклатура</Th><Th $on>Количество</Th></tr></thead>
        <tbody>
          <tr><Td $tick><Check type="checkbox" defaultChecked aria-label="Стол обеденный" /></Td><Td $num>1</Td><Td>Стол обеденный</Td><Td $num>10</Td></tr>
          <tr><Td $tick><Check type="checkbox" defaultChecked aria-label="Стул обыный" /></Td><Td $num>2</Td><Td>Стул обыный</Td><Td $num $sel>10</Td></tr>
        </tbody>
      </List>
    </ListBox>
  </Form>
);

const menu: [string, string, string, number][] = [
  ["", "Ф", "айл", 41], ["", "П", "равка", 47], ["Таблица", "", "", 48], ["Операции", "", "", 54],
  ["Справочники", "", "", 72], ["Документы", "", "", 63], ["Отчеты", "", "", 46], ["", "С", "ервис", 48],
  ["", "О", "кна", 39], ["Сп", "р", "авка", 60],
];

const Flag = () => <Svg s={15}><path d="M2 1v14" stroke="#fff" strokeWidth="1.500" /><path d="M3 2h5l1 1h5v7H9L8 9H3z" fill="#e8eef4" /><path d="M8 8l6 6M14 8l-6 6" stroke="#d82820" strokeWidth="2.500" /></Svg>;
const Plug = () => <Svg s={15}><path d="M2 3h7v11H2z" stroke="#fff" strokeWidth="1.500" /><path d="M8 2v4M13 2v4M7 6h7v3l-2 2v4" stroke="#fff" strokeWidth="1.500" fill="#cde" /></Svg>;
const Signal = () => <Svg s={15}><path d="M2 14v-2M5 14v-4M8 14V8M11 14V5M14 14V2" stroke="#fff" strokeWidth="2" /></Svg>;
const Sound = () => <Svg s={15}><path d="M2 6h3l4-4v12l-4-4H2z" fill="#fff" /><path d="M11 5q2 3 0 6" stroke="#fff" strokeWidth="1.300" /></Svg>;
const Safe = () => <Svg s={15}><path d="M1 8q3-6 8-5 5 0 6 5l-6-1-5 4z" fill="#e8e8e8" stroke="#889" strokeWidth=".5" /><circle cx="11" cy="11" r="4.500" fill="#38a838" /><path d="M9 11l2 2 3-4" stroke="#fff" strokeWidth="1.500" /></Svg>;
const StartOrb = () => (
  <svg width="33" height="33" viewBox="0 0 33 33" aria-hidden="true">
    <defs><radialGradient id="orb" cx=".5" cy=".9" r=".9"><stop offset="0" stopColor="#58c8f0" /><stop offset=".6" stopColor="#1c5c94" /><stop offset="1" stopColor="#4a7898" /></radialGradient></defs>
    <circle cx="16.500" cy="16.500" r="15.500" fill="url(#orb)" stroke="#9cc4d8" />
    <path d="M9 9q4-2.500 8 0l-1.500 7q-4-2-8 0z" fill="#f06830" />
    <path d="M18 9.500q4 2 7.500 0l-1.500 7q-4 2-7.500 0z" fill="#90c840" />
    <path d="M7 17.500q4-2 8 0l-1.500 7q-4-2-8 0z" fill="#48a4e0" />
    <path d="M16 18q4 2 7.500 0l-1.500 7q-4 2-7.500 0z" fill="#f8cc38" />
  </svg>
);
const Folder = () => <svg width="27" height="28" viewBox="0 0 27 28"><path d="M3 2l8 1v24l-8-3z" fill="#f8e8a0" stroke="#dcc470" /><path d="M11 5l9-3v21l-9 4z" fill="#f2d880" stroke="#dcc060" /><path d="M9 15l4-1v9l-4 1z" fill="#fff" opacity=".5" /></svg>;
const Chrome = () => (
  <svg width="27" height="27" viewBox="0 0 28 28">
    <path d="M14 14L2.300 7.200A13.500 13.500 0 0 1 25.700 7.200z" fill="#dc4434" />
    <path d="M14 14L25.700 7.200A13.500 13.500 0 0 1 14 27.500z" fill="#fccc38" />
    <path d="M14 14v13.500A13.500 13.500 0 0 1 2.300 7.200z" fill="#28a050" />
    <path d="M14 7.500h11.800L14 14z" fill="#fccc38" /><path d="M14 7.500h11.800L24 5 14 5z" fill="#dc4434" />
    <circle cx="14" cy="14" r="6.300" fill="#fff" /><circle cx="14" cy="14" r="5" fill="#4080e8" />
  </svg>
);
const Painter = () => <svg width="27" height="28" viewBox="0 0 27 28"><path d="M1 1h22v26H1z" fill="#f4f4f4" stroke="#bbb" /><path d="M3 3h18v14H3z" fill="#1c50a8" /><path d="M3 11L13 3h8v6q-5-2-8 3t-10 5z" fill="#b8d4f0" /><path d="M5 19h16v5H5z" fill="#182038" /><path d="M26 9L9 24l-3 2 1-4z" fill="#8c2838" /></svg>;
const Compass = () => <svg width="27" height="28" viewBox="0 0 28 28"><rect x="1" y="1" width="26" height="26" rx="3" fill="#f4dc30" stroke="#a89428" /><path d="M8 24l12-6 4 6z" fill="#80b830" /><path d="M12 8L6 23M13 8l7 15" stroke="#e8e8e8" strokeWidth="2.500" /><path d="M12.500 1v8" stroke="#222" strokeWidth="3.500" /></svg>;

export default function App() {
  return (
    <Shell>
      <Global />
      <TitleBar>
        <OneC s={14} />
        <TitleText>tekdata.ru / Админ / "Управление торговлей", редакция 10.3 - tekdata.ru</TitleText>
        <WinButtons>
          <WinButton type="button" aria-label="Свернуть"><Svg s={12}><path d="M2 11h12" stroke="#fff" strokeWidth="3.500" /></Svg></WinButton>
          <WinButton type="button" aria-label="Восстановить"><Svg s={12}><path d="M5 5V2h9v9h-3M2 5h9v9H2zM5 8h3v3H5z" stroke="#fff" strokeWidth="1.600" /></Svg></WinButton>
          <WinButton type="button" $close aria-label="Закрыть"><Svg s={12}><path d="M3 4l10 9M13 4L3 13" stroke="#fff" strokeWidth="3.200" /></Svg></WinButton>
        </WinButtons>
      </TitleBar>
      <MenuBar>
        <Grip />
        <Gap $w={6} />
        {menu.map(([a, u, b, w]) => <MenuItem key={a + u + b} type="button" $w={w}>{a}{u && <u>{u}</u>}{b}</MenuItem>)}
      </MenuBar>
      <ToolBar>
        <Grip />
        <Tools w={65} names="page open save" /><Sep />
        <Tools w={65} names="cut copy paste" /><Sep />
        <Tools w={43} names="print preview" /><Sep />
        <Tools w={43} names="undo redo" /><Sep />
        <Tools w={22} names="search" />
        <FieldBox $w={141} $h={19}>
          <Input aria-label="Поиск" />
          <FieldBtn type="button" aria-label="Список"><BigTri /></FieldBtn>
          <FieldBtn type="button" aria-label="Очистить"><Svg s={10}><path d="M2 2l12 12M14 2L2 14" stroke="#4a4230" strokeWidth="2.500" /></Svg></FieldBtn>
        </FieldBox>
        <Tools w={43} names="next prev" /><Sep />
        <Tools w={22} names="windows" /><Sep />
        <Tools w={22} names="info" />
        <MoreBtn />
        <Grip $m={5} />
        <Tools w={65} names="calc calendar lock" /><Sep />
        <Group $w={65}>
          <MemKey type="button">M</MemKey><MemKey type="button">M+</MemKey><MemKey type="button">M−</MemKey>
        </Group>
        <Sep />
        <Tools w={22} names="wrench" />
        <MoreBtn />
      </ToolBar>
      <ToolBar>
        <Grip />
        <Tools w={87} names="book pBlue pGreen pOrange" /><Sep />
        <Tools w={65} names="people cash sign" />
        <MoreBtn />
        <Grip $m={4} />
        <Tools w={151} names="discRed discBlue discRed2 discCoins discBars discArrow discCoins2" />
        <Sep />
        <Tools w={367} names="saleDoc flow1 buyDoc flow2 flow3 coinsMove tillDoc flow4 docArrow docCoin plusCoins minusCoins docTick docCoins docPct docMen green" />
        <MoreBtn />
        <Grip $m={3} />
        <Tools w={173} names="s1 s2 s3 s4 s5 s6 s7 s8" />
        <MoreBtn />
      </ToolBar>
      <Mdi>
        <DocTitle>
          <Icon n="form" />
          <Heading>Печать ценников со штрихкодами</Heading>
          <TitleTool type="button" aria-label="Свернуть"><Svg s={12}><path d="M3 13h10" stroke="#666" strokeWidth="2" /></Svg></TitleTool>
          <TitleTool type="button" aria-label="Восстановить"><Svg s={12}><path d="M5 5V2h10v8h-4M1 6h10v8H1z" stroke="#666" strokeWidth="1.500" /></Svg></TitleTool>
          <TitleTool type="button" aria-label="Закрыть"><Svg s={12}><path d="M3 3l10 10M13 3L3 13" stroke="#666" strokeWidth="2.200" /></Svg></TitleTool>
        </DocTitle>
        <CommandBar>
          <DropBtn type="button" $w={60}>Действия<Tri /></DropBtn>
          <Sep />
          <Tools w={43} names="restore store" />
          <Sep />
          <Tools w={22} names="help" />
        </CommandBar>
        <PriceTagForm />
        <FormFoot>
          <Link href="#tekdata">tekdata.ru</Link>
          <TextBtn type="button" $bold><Icon n="print" s={13} />Печать</TextBtn>
          <Gap $w={4} /><Sep /><Gap $w={4} />
          <TextBtn type="button">Закрыть</TextBtn>
        </FormFoot>
        <TemplateDialog />
      </Mdi>
      <WindowTabs>
        <WindowTab type="button" $w={160}><Icon n="page" />Поступления товаров и услуг</WindowTab>
        <WindowTab type="button" $w={160}><Icon n="page" />Поступление то...: Проведен</WindowTab>
        <WindowTab type="button" $w={160}><Icon n="form" />Печать ценников со штрихк...</WindowTab>
        <WindowTab type="button" $w={161} $on><Icon n="page" />Редакирование макета цен...</WindowTab>
      </WindowTabs>
      <Status>
        <span>Для получения подсказки нажмите F1</span>
        <Led $off>CAP</Led>
        <Led>NUM</Led>
      </Status>
      <TaskBar>
        <StartOrb />
        <Tasks>
          <Task type="button"><Folder />obrabotki</Task>
          <Task type="button"><Chrome />Печать ценников...</Task>
          <Task type="button"><Painter />pechat-tsennikov...</Task>
          <Task type="button"><Compass />C:\Users\e\Deskt...</Task>
          <Task type="button" $on><OneC s={27} />tekdata.ru / Адми...</Task>
        </Tasks>
        <Tray>
          <span>RU</span>
          <Gap $w={2} />
          <Tri $up $c="#fff" />
          <Gap $w={1} />
          <Flag /><Plug /><Signal /><Sound /><Safe />
          <Clock>16:16<br />10.02.2017</Clock>
          <ShowDesktop type="button" aria-label="Показать рабочий стол" />
        </Tray>
      </TaskBar>
    </Shell>
  );
}
